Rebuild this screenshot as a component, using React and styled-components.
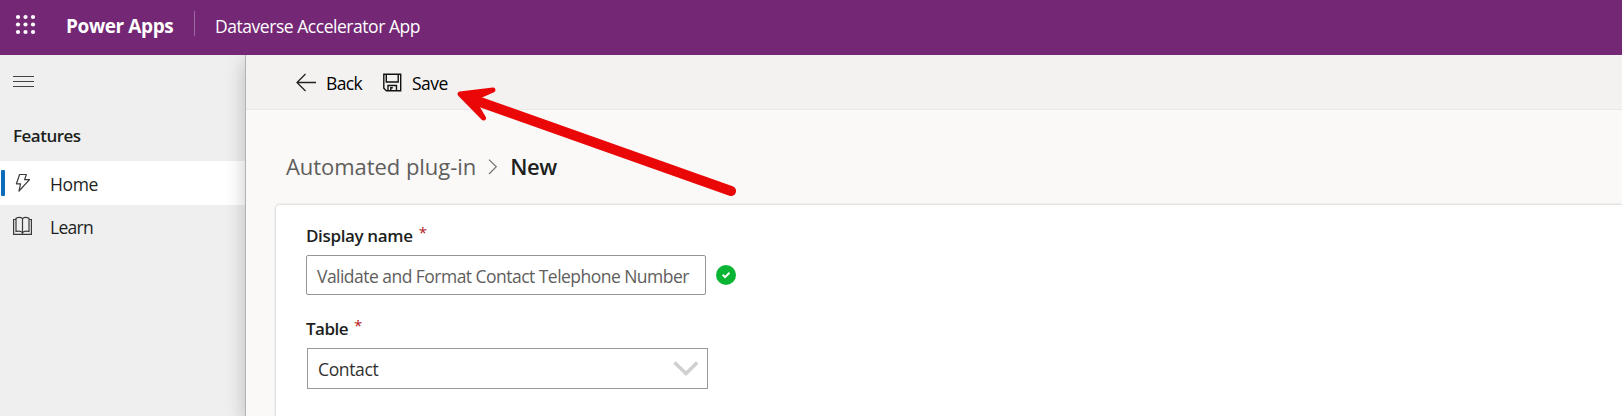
import React from "react";
import styled, { createGlobalStyle } from "styled-components";

const GlobalStyle = createGlobalStyle`
  * { box-sizing: border-box; }
  body {
    margin: 0;
    overflow: hidden;
    background: #faf9f8;
    font-family: "Segoe UI", "Open Sans", "Noto Sans", sans-serif;
  }
`;

const Page = styled.div`
  position: relative;
  display: flex;
  flex-direction: column;
  height: 416px;
  overflow: hidden;
`;

const Label = styled.span`
  font-size: ${(p) => p.$size || 17.5}px;
  font-weight: ${(p) => p.$weight || 400};
  letter-spacing: ${(p) => p.$track || 0}px;
  color: ${(p) => p.$color || "#201f1e"};
  line-height: 24px;
  white-space: nowrap;
`;

const Header = styled.header`
  display: flex;
  flex: 0 0 55px;
  height: 55px;
  padding-left: 15px;
  background: #742774;
  & > svg { margin-top: 14px; }
`;

const Brand = styled.div`
  padding: 14px 0 0 30px;
  width: 158px;
`;

const AppName = styled.div`
  padding: 14px 0 0 20px;
`;

const HeaderDivider = styled.div`
  width: 1px;
  margin: 11px 0 19px;
  background: #9d689d;
`;

const Body = styled.div`
  display: flex;
  flex: 1;
  min-height: 0;
`;

const Sidebar = styled.nav`
  flex: 0 0 245px;
  background: #efefef;
`;

const MenuToggle = styled.div`
  height: 67px;
  padding: 20px 0 0 13px;
  & > svg { display: block; }
`;

const SectionTitle = styled.div`
  height: 39px;
  padding: 2px 0 0 13px;
`;

const NavItem = styled.div`
  display: flex;
  height: 44px;
  padding-left: 1px;
  background: ${(p) => (p.$active ? "#fff" : "transparent")};
  & > svg { margin: 10px 13px 0 8px; }
  & > span { padding-top: ${(p) => (p.$active ? 11 : 10)}px; }
`;

const ActiveBar = styled.div`
  width: 4px;
  height: 26px;
  margin-top: 9px;
  border-radius: 1px;
  background: ${(p) => (p.$on ? "#0f6cbd" : "transparent")};
`;

const Main = styled.main`
  flex: 1;
  display: flex;
  flex-direction: column;
  border-left: 1px solid #b5b3b2;
  background: #faf9f8;
  box-shadow: 0 6px 18px rgba(0, 0, 0, 0.22);
  clip-path: inset(0 0 0 -30px);
`;

const Toolbar = styled.div`
  display: flex;
  height: 55px;
  padding-left: 50px;
  background: #f3f2f1;
  border-bottom: 1px solid #eae8e7;
`;

const Command = styled.div`
  display: flex;
  width: ${(p) => p.$width}px;
  & > svg { margin-top: 18px; }
  & > span { padding-top: 16px; margin-left: 10px; }
`;

const Breadcrumb = styled.div`
  display: flex;
  height: 95px;
  padding: 44px 0 0 40px;
  & > svg { margin: 4px 12px 0; }
`;

const Card = styled.section`
  flex: 1;
  margin-left: 30px;
  padding: 19px 0 0 30px;
  background: #fff;
  border-radius: 4px 0 0 0;
  box-shadow: 0 0 3px rgba(0, 0, 0, 0.26);
`;

const FieldLabel = styled.div`
  display: flex;
  height: 31px;
`;

const Required = styled.span`
  margin: -3px 0 0 6px;
  font-size: 15px;
  line-height: 22px;
  color: #b3161b;
`;

const FieldRow = styled.div`
  display: flex;
  align-items: center;
  margin-bottom: 22px;
`;

const TextBox = styled.div`
  width: 400px;
  height: 40px;
  margin-right: 10px;
  padding: 8px 0 0 10px;
  border: 1px solid #979593;
  border-radius: 2px;
`;

const Select = styled.div`
  display: flex;
  justify-content: space-between;
  width: 401px;
  height: 41px;
  margin-left: 1px;
  padding: 8px 8px 0 10px;
  border: 1px solid #9b9999;
  & > svg { margin-top: 1px; }
`;

const Pointer = styled.svg`
  position: absolute;
  left: 450px;
  top: 80px;
  pointer-events: none;
`;

const Waffle = () => (
  <svg width="21" height="21" fill="#fff">
    {[3, 10.5, 18].map((y) =>
      [3, 10.5, 18].map((x) => <circle key={`${x}-${y}`} cx={x} cy={y} r="2.1" />)
    )}
  </svg>
);

const Hamburger = () => (
  <svg width="21" height="13" stroke="#44423f">
    <path d="M0 1.5H21M0 6.5H21M0 11.5H21" />
  </svg>
);

const Lightning = () => (
  <svg width="24" height="24" fill="none" stroke="#3b3a39" strokeWidth="1.2" strokeLinejoin="round">
    <path d="M6.6 3.5H13.4L11.6 8.600H16.500L6 20L7.500 12.800H3.400Z" />
  </svg>
);

const Book = () => (
  <svg width="24" height="24" fill="none" stroke="#3b3a39" strokeWidth="1.2">
    <path d="M3 3.2C5.5 2 7.8 2 9.5 3.6C11.2 2 13.5 2 16 3.2V16.5C13.5 15.700 11.200 16 9.500 17.500C7.800 16 5.500 15.700 3 16.500ZM9.500 3.600V19" />
    <path d="M3 4.500H0.600V19.300H18.400V4.500H16" />
  </svg>
);

const BackArrow = () => (
  <svg width="20" height="20" fill="none" stroke="#222">
    <path d="M9.5 1L1 9.5L9.5 18M1 9.5H20" strokeWidth="1.3" />
  </svg>
);

const Floppy = () => (
  <svg width="19" height="20" fill="none" stroke="#111" strokeWidth="1.4">
    <path d="M.8 1.3H17.700V17.700H3.400L.8 15.200ZM3.300 1.300V9H15.200V1.300M5 17.500V12.500H13.500V17.500M7.800 17.500V14.700H9.800" />
  </svg>
);

const Crumb = () => (
  <svg width="10" height="18" fill="none" stroke="#777573">
    <path d="M1 1.6L8.3 8.8L1 16" strokeWidth="1.2" />
  </svg>
);

const Valid = () => (
  <svg width="20" height="20">
    <circle cx="10" cy="10" r="10" fill="#0bb534" />
    <path d="M6.7 9.8L9.1 12.1L13.5 7.8" fill="none" stroke="#fff" strokeWidth="2" />
  </svg>
);

const Chevron = () => (
  <svg width="26" height="18" fill="none" stroke="#d0d0d0">
    <path d="M1.5 4.5L13 15.5L24.2 4.5" strokeWidth="3.5" />
  </svg>
);

export default function App() {
  return (
    <Page>
      <GlobalStyle />
      <Header>
        <Waffle />
        <Brand>
          <Label $size={19} $weight={700} $color="#fff" $track={-0.4}>Power Apps</Label>
        </Brand>
        <HeaderDivider />
        <AppName>
          <Label $color="#fff" $track={-0.46}>Dataverse Accelerator App</Label>
        </AppName>
      </Header>
      <Body>
        <Sidebar>
          <MenuToggle><Hamburger /></MenuToggle>
          <SectionTitle>
            <Label $size={17} $weight={600} $track={-0.5}>Features</Label>
          </SectionTitle>
          <NavItem $active>
            <ActiveBar $on />
            <Lightning />
            <Label $track={-0.4}>Home</Label>
          </NavItem>
          <NavItem>
            <ActiveBar />
            <Book />
            <Label $track={-0.7}>Learn</Label>
          </NavItem>
        </Sidebar>
        <Main>
          <Toolbar>
            <Command $width={87}>
              <BackArrow />
              <Label $color="#000" $track={-0.6}>Back</Label>
            </Command>
            <Command $width={80}>
              <Floppy />
              <Label $color="#000" $track={-0.5}>Save</Label>
            </Command>
          </Toolbar>
          <Breadcrumb>
            <Label $size={22} $color="#605e5c" $track={-0.05}>Automated plug-in</Label>
            <Crumb />
            <Label $size={22} $weight={600} $track={-0.4}>New</Label>
          </Breadcrumb>
          <Card>
            <FieldLabel>
              <Label $size={17} $weight={600} $track={-0.35}>Display name</Label>
              <Required>*</Required>
            </FieldLabel>
            <FieldRow>
              <TextBox>
                <Label $color="#605e5c" $track={-0.53}>Validate and Format Contact Telephone Number</Label>
              </TextBox>
              <Valid />
            </FieldRow>
            <FieldLabel>
              <Label $size={17} $weight={600} $track={-0.5}>Table</Label>
              <Required>*</Required>
            </FieldLabel>
            <Select>
              <Label $color="#323130" $track={-0.35}>Contact</Label>
              <Chevron />
            </Select>
          </Card>
        </Main>
      </Body>
      <Pointer width="300" height="130" fill="none" stroke="#ea0707" strokeLinecap="round" strokeLinejoin="round">
        <path d="M281 111L30 22" strokeWidth="10" />
        <path d="M10 14L43 10L27 17L24 22L33.5 38Z" fill="#ea0707" strokeWidth="5" />
      </Pointer>
    </Page>
  );
}
